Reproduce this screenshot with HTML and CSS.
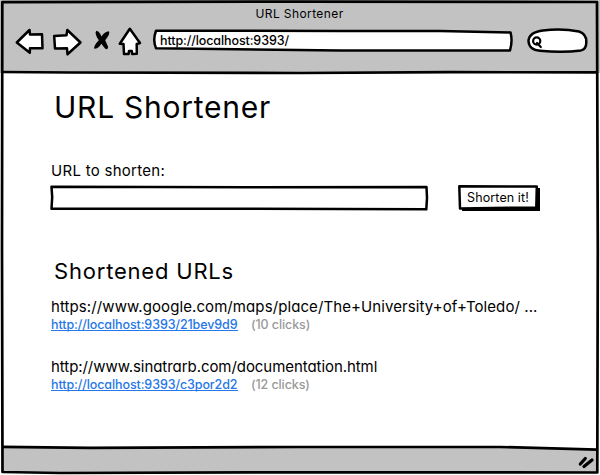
FILE: index.html
```
<!DOCTYPE html>
<html lang="en">
<head>
<meta charset="utf-8">
<title>URL Shortener</title>
<link rel="stylesheet" href="styles.css">
</head>
<body>
<div class="window">
  <header class="chrome">
    <div class="window-title"><span>URL Shortener</span></div>
    <div class="toolbar">
      <svg class="nav-icons" width="130" height="32" viewBox="14 20 130 32">
        <g class="ink paper">
          <path d="M16.8 37.5 L29.5 25 L30 29.5 L42 29.2 L42.5 43.3 L30 43.2 L29.8 47.8 Z"/>
          <path d="M54.2 31 L66.5 30.2 L67.3 25 L80.5 37.5 L67.5 49.3 L67 43.3 L55 43.5 Z"/>
          <path d="M129.8 23.8 L140 38 L136.7 39 L136.8 48.8 L132.2 49 L131.8 46 L129 46 L128.6 49 L124 49 L123.5 39 L119.8 38.8 Z"/>
        </g>
        <path class="solid" d="M96.5 25.8 Q99 26 101.6 31.5 Q104.5 26.5 109 26.3 Q110.5 29 105.2 35.2 L108.2 42 Q107.5 45.5 105 43.6 L101.3 38.7 Q98.5 43.8 94.3 43.8 Q93.2 41 98.8 35.2 Q93.8 28.5 96.5 25.8Z"/>
      </svg>
      <div class="address">
        <svg class="outline" width="362" height="26" viewBox="152 29 362 26"><path class="ink paper" d="M156 31.7 L340 32 L440 32 L510.5 33.4 Q512.8 42 510 51.5 L340 51.4 L156 49.3 Q152.5 41 156 31.7Z"/></svg>
        <span class="address-text">http://localhost:9393/</span>
      </div>
      <svg class="search" width="62" height="28" viewBox="526 27 62 28">
        <path class="ink paper" d="M543 30.4 Q562 28 579 31.5 Q586.5 34 586.3 42 Q586.5 49 581 50.4 Q563 53 540 50.8 Q529 50 528.5 41 Q529 32 543 30.4Z"/>
        <circle class="ink paper lens" cx="536.7" cy="41" r="3.6"/><path class="ink lens" d="M537 43 L540.8 47"/>
      </svg>
    </div>
  </header>
  <main class="page">
    <h1><span>URL Shortener</span></h1>
    <label class="field-label" for="url"><span>URL to shorten:</span></label>
    <div class="form-row">
      <div class="field">
        <svg class="outline" width="379" height="27" viewBox="50 184 379 27"><path class="ink paper" d="M51.5 186.8 L250 187.3 L426.5 187 L427 198 L426.3 209.3 L240 208.8 L51.5 208.7 L52.2 197Z"/></svg>
        <input id="url" type="text">
      </div>
      <button type="button">
        <svg class="outline" width="82" height="27" viewBox="458 184 82 27"><path class="solid" d="M462 188 H540 V211.5 H462Z"/><path class="ink paper" d="M459.3 186.2 L536.8 186.5 L536.3 207.5 L460 208.4Z"/></svg>
        <span class="button-text">Shorten it!</span>
      </button>
    </div>
    <h2><span>Shortened URLs</span></h2>
    <ul class="urls">
      <li>
        <div class="long long-map"><span>https://www.google.com/maps/place/The+University+of+Toledo/ ...</span></div>
        <div class="short"><a href="#">http://localhost:9393/21bev9d9</a><span class="clicks">(10 clicks)</span></div>
      </li>
      <li>
        <div class="long long-doc"><span>http://www.sinatrarb.com/documentation.html</span></div>
        <div class="short"><a href="#">http://localhost:9393/c3por2d2</a><span class="clicks">(12 clicks)</span></div>
      </li>
    </ul>
  </main>
  <footer class="status"></footer>
  <svg class="frame" width="600" height="475" viewBox="0 0 600 475">
    <path class="fill" d="M3 447 L500 447 L597 449.5 V472 H3Z"/>
    <path class="edge" d="M2.3 2.2 L300 1.6 L597 2 L597.8 250 L597.3 472.5 L250 472.3 L60 473 L2.5 472 L2 250 Z"/>
    <path class="edge" d="M2 72 L70 72.5 L300 73 L450 72.2 L597 72.3"/>
    <path class="edge" d="M2 446.8 L90 447.9 L300 447 L500 447 L597 449.6"/>
    <path class="grip" d="M580.3 464 L585.3 458.5 M584 466.5 L592 460"/>
  </svg>
</div>
</body>
</html>
```
FILE: styles.css
```
* { box-sizing: border-box; }
body {
  margin: 0;
  background: #fff;
  color: #000;
  font-family: Inter, "Liberation Sans", sans-serif;
  font-feature-settings: "cv11", "calt" 0;
}
h1, h2, ul { margin: 0; padding: 0; font-weight: 400; }
ul { list-style: none; }
.window {
  position: relative;
  display: grid;
  grid-template-rows: 73px 1fr 27px;
  width: 600px;
  height: 475px;
  overflow: hidden;
}
.chrome { background: #c2c2c2; padding: 4px 12px 0 14px; }
.window-title { height: 19px; line-height: 19px; text-align: center; font-size: 12px; letter-spacing: 0.4px; padding-right: 3px; }
.toolbar { display: flex; align-items: center; height: 36px; }
.nav-icons { margin-right: 8px; }
.address { position: relative; width: 362px; height: 26px; margin-right: 12px; }
.address-text { position: relative; display: block; padding-left: 8px; font-size: 12.5px; font-weight: 500; letter-spacing: -0.1px; line-height: 25px; }
.outline { position: absolute; left: 0; top: 0; display: block; }
.ink { fill: none; stroke: #000; stroke-width: 2.5; stroke-linejoin: round; stroke-linecap: round; }
.ink.paper { fill: #fff; }
.ink.lens { stroke-width: 2.2; }
.solid { fill: #000; }
.page { padding: 12px 50px 0; }
h1 { height: 44px; line-height: 44px; padding-left: 4px; font-size: 30px; letter-spacing: 0.75px; }
.field-label { display: block; margin-top: 32px; height: 20px; line-height: 20px; padding-left: 1px; font-size: 15px; letter-spacing: 0.28px; }
.form-row { display: flex; gap: 29px; margin-top: 3px; height: 27px; }
.field { position: relative; width: 379px; }
.field input { position: relative; width: 371px; height: 19px; margin: 4px; padding: 0 4px; border: 0; outline: 0; background: transparent; font: inherit; }
button { position: relative; width: 82px; height: 27px; padding: 0; border: 0; background: none; color: inherit; font: inherit; font-feature-settings: inherit; }
.button-text { position: relative; display: block; padding-right: 2px; font-size: 12.5px; letter-spacing: 0.1px; line-height: 27px; }
h2 { margin-top: 43px; height: 34px; line-height: 34px; padding-left: 4px; font-size: 22px; letter-spacing: 0.8px; }
.urls li { height: 60px; padding: 9px 0 0 1px; }
.long { height: 20px; line-height: 20px; font-size: 15px; white-space: nowrap; }
.long-map { letter-spacing: 0.09px; }
.long-doc { letter-spacing: -0.06px; }
.short { display: flex; margin-top: -1px; height: 17px; line-height: 17px; font-size: 12.5px; font-weight: 500; letter-spacing: -0.1px; }
.short a { width: 187px; height: 15px; margin-right: 13px; border-bottom: 1px solid #2677e8; color: #2677e8; text-decoration: none; }
.clicks { color: #999; }
.status { background: #fff; }
.frame { position: absolute; inset: 0; pointer-events: none; }
.fill { fill: #c2c2c2; }
.edge { fill: none; stroke: #000; stroke-width: 2.7; stroke-linejoin: round; }
.grip { fill: none; stroke: #000; stroke-width: 3.2; stroke-linecap: round; }
```
